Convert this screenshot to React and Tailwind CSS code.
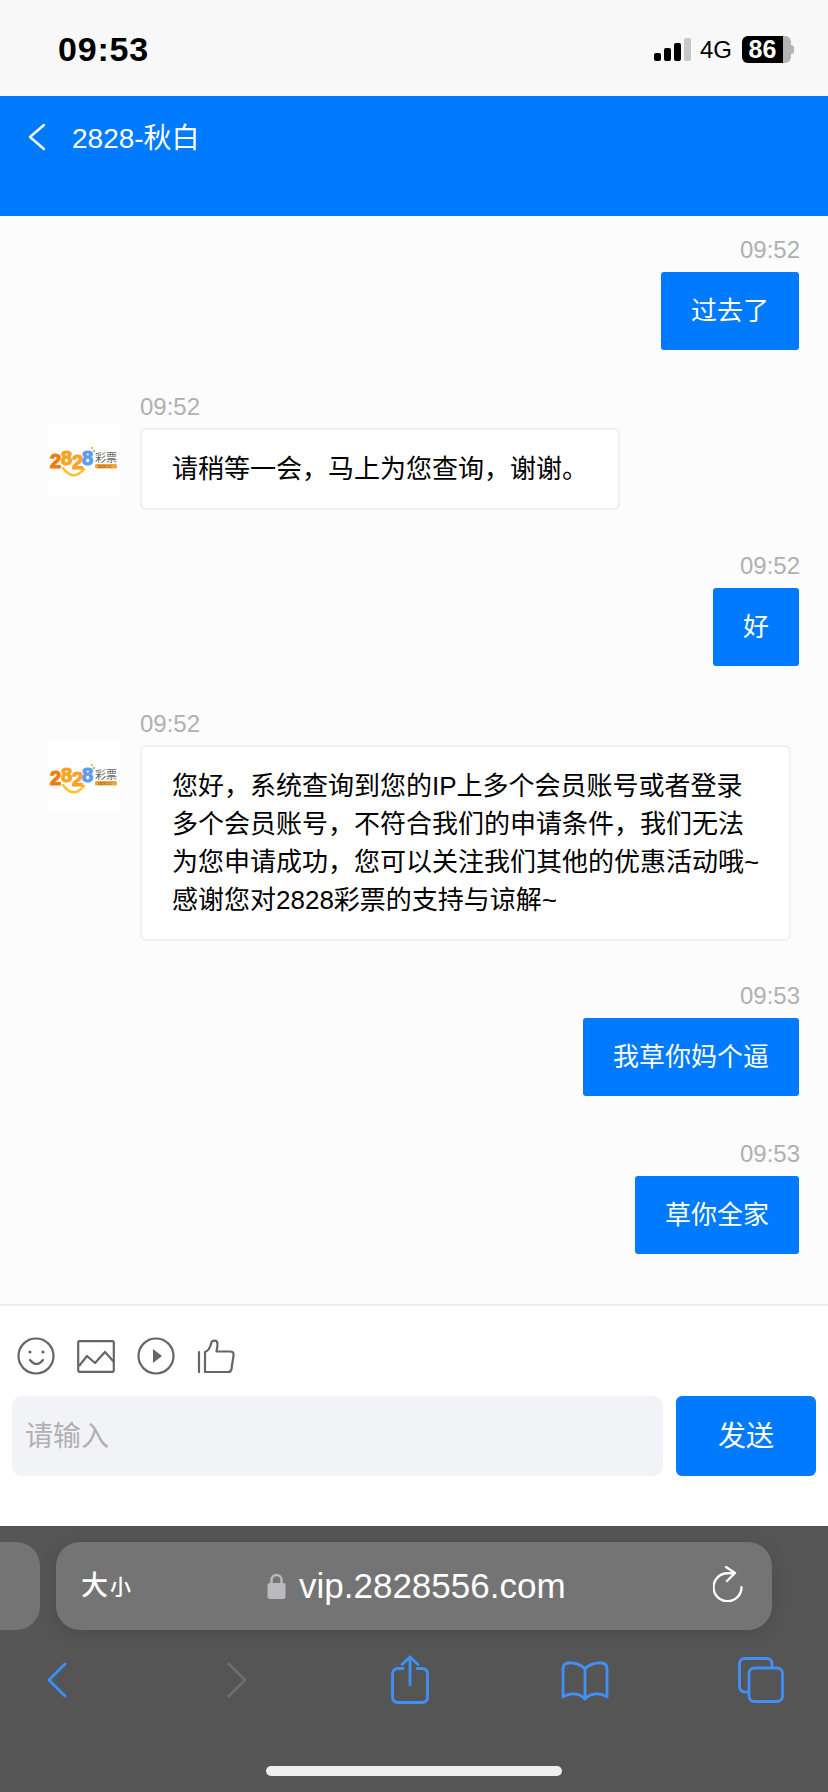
const cjk = "font-['Liberation_Sans','Noto_Sans_CJK_SC',sans-serif]"

const Logo = () => (
  <svg viewBox="0 0 72 72" className="w-full h-full">
    <rect width="72" height="72" fill="#fff" />
    <path d="M15 44 Q25 58 36 45" fill="none" stroke="#fcc22e" strokeWidth="2.6" strokeLinecap="round" />
    <g fontSize="20" fontWeight="700" fontFamily="Liberation Sans" strokeWidth="1.2">
      <text x="2" y="44" fill="#f47a10" stroke="#f47a10">2</text>
      <text x="13" y="41" fill="#f9a51f" stroke="#f9a51f">8</text>
      <text x="24" y="45" fill="#f7a32b" stroke="#f7a32b">2</text>
      <text x="34" y="41" fill="#5f9cee" stroke="#5f9cee">8</text>
    </g>
    <circle cx="44" cy="24" r="1.2" fill="#fbc02d" />
    <circle cx="46" cy="27" r="1" fill="#5f9cee" />
    <text x="47" y="38" fontSize="11" fill="#666" fontFamily="Noto Sans CJK SC">彩票</text>
    <rect x="47" y="40" width="22" height="4.5" rx="1.5" fill="#f2a33a" />
    <text x="49.5" y="43.8" fontSize="3.6" fill="#7a4a10" fontFamily="Liberation Sans">2828.CC</text>
  </svg>
)

const RightMsg = ({ time, text, className }) => (
  <div className={`flex flex-col items-end pr-[29px] ${className}`}>
    <div className="h-[28px] leading-[28px] text-[24px] text-[#b0b0b0] -mr-[1px]">{time}</div>
    <div className="mt-[8px] px-[30px] pt-[20px] pb-[19px] bg-[#007aff] text-white text-[26px] leading-[39px] rounded-[3px]">{text}</div>
  </div>
)

const LeftMsg = ({ time, lines, className }) => (
  <div className={`flex pl-[48px] ${className}`}>
    <div className="mt-[31px] w-[72px] h-[72px] shrink-0"><Logo /></div>
    <div className="ml-[20px] flex flex-col items-start">
      <div className="h-[28px] leading-[28px] text-[24px] text-[#b0b0b0]">{time}</div>
      <div className="mt-[7px] px-[30px] pt-[20px] pb-[20px] bg-white border-2 border-[#f0f0f0] rounded-[6px] text-black text-[26px] leading-[38px]">
        {lines.map((l) => <div key={l} className="whitespace-nowrap">{l}</div>)}
      </div>
    </div>
  </div>
)

export default function App() {
  return (
    <div className={`w-[828px] h-[1792px] flex flex-col overflow-hidden bg-[#fcfcfc] ${cjk}`}>
      {/* status bar */}
      <div className="h-[96px] shrink-0 bg-[#f8f8f8] flex items-center justify-between pl-[58px] pr-[34px] pt-[3px]">
        <div className="text-[34px] font-bold text-black tracking-[0.8px]">09:53</div>
        <div className="flex items-center">
          <div className="flex items-end gap-[3px] h-[23px]">
            <div className="w-[7px] h-[8px] rounded-[2px] bg-black" />
            <div className="w-[7px] h-[13px] rounded-[2px] bg-black" />
            <div className="w-[7px] h-[18px] rounded-[2px] bg-black" />
            <div className="w-[7px] h-[23px] rounded-[2px] bg-[#c8c8c8]" />
          </div>
          <div className="ml-[9px] text-[24px] text-black">4G</div>
          <div className="ml-[10px] w-[49px] h-[27px] rounded-[6px] overflow-hidden flex bg-[#b3b3b3]">
            <div className="w-[41px] bg-black text-white text-[25px] font-bold leading-[27px] text-center">86</div>
          </div>
          <div className="w-[3px] h-[9px] rounded-r-[3px] bg-[#b3b3b3]" />
        </div>
      </div>

      {/* header */}
      <div className="h-[120px] shrink-0 bg-[#007aff] flex items-start text-white pt-[27px] pl-[27px]">
        <svg viewBox="0 0 19 28" className="w-[19px] h-[28px] mr-[26px]" fill="none" stroke="#fff" strokeWidth="2.4" strokeLinecap="round" strokeLinejoin="round">
          <path d="M17 2 L3 14 L17 26" />
        </svg>
        <div className="text-[28px] leading-[32px]">2828-秋白</div>
      </div>

      {/* messages */}
      <div className="h-[1088px] shrink-0 pt-[20px]">
        <RightMsg time="09:52" text="过去了" />
        <LeftMsg className="mt-[43px]" time="09:52" lines={["请稍等一会，马上为您查询，谢谢。"]} />
        <RightMsg className="mt-[42px]" time="09:52" text="好" />
        <LeftMsg
          className="mt-[44px]"
          time="09:52"
          lines={[
            "您好，系统查询到您的IP上多个会员账号或者登录",
            "多个会员账号，不符合我们的申请条件，我们无法",
            "为您申请成功，您可以关注我们其他的优惠活动哦~",
            "感谢您对2828彩票的支持与谅解~",
          ]}
        />
        <RightMsg className="mt-[41px]" time="09:53" text="我草你妈个逼" />
        <RightMsg className="mt-[44px]" time="09:53" text="草你全家" />
      </div>

      {/* composer */}
      <div className="h-[222px] shrink-0 bg-white border-t-2 border-[#eeeeee]">
        <div className="flex items-center gap-[22px] pl-[17px] pt-[31px] text-[#666666]">
          <svg viewBox="0 0 38 38" className="w-[38px] h-[38px]" fill="none" stroke="currentColor" strokeWidth="2.2" strokeLinecap="round">
            <circle cx="19" cy="19" r="17.5" />
            <circle cx="13" cy="15" r="1.6" fill="currentColor" stroke="none" />
            <circle cx="26" cy="15" r="1.6" fill="currentColor" stroke="none" />
            <path d="M13 23 Q19.5 31 26 23" />
          </svg>
          <svg viewBox="0 0 38 33" className="w-[38px] h-[33px]" fill="none" stroke="currentColor" strokeWidth="2.2" strokeLinejoin="round">
            <rect x="1.2" y="1.2" width="35.6" height="30.6" rx="1.5" />
            <path d="M2 26 L10 16 L18 23 L28 12 L37 22" />
          </svg>
          <svg viewBox="0 0 38 38" className="w-[38px] h-[38px]" fill="none" stroke="currentColor" strokeWidth="2.2">
            <circle cx="19" cy="19" r="17.5" />
            <path d="M16 12 L25 19 L16 26 Z" fill="currentColor" stroke="none" />
          </svg>
          <svg viewBox="0 0 38 34" className="w-[38px] h-[34px]" fill="none" stroke="currentColor" strokeWidth="2.2" strokeLinejoin="round" strokeLinecap="round">
            <path d="M2 13 V33" />
            <path d="M8 33 V13 C11 12 13 9 14 5 C14.5 0.5 20.5 0.5 20.5 5 C20.5 7.5 20 10 19.5 12.5 H33 C35.5 12.5 37 14 36.5 16.5 L34.5 30 C34.2 32 33 33 31 33 Z" />
          </svg>
        </div>
        <div className="flex mt-[21px] pl-[12px] pr-[12px] gap-[13px]">
          <div className="flex-1 h-[80px] rounded-[10px] bg-[#f2f3f7] flex items-center pl-[13px] pt-[2px] text-[28px] text-[#b0b0b0]">请输入</div>
          <div className="w-[140px] h-[80px] rounded-[6px] bg-[#007aff] text-white text-[28px] pt-[2px] flex items-center justify-center">发送</div>
        </div>
      </div>

      {/* safari chrome */}
      <div className="flex-1 bg-[#555555] flex flex-col relative">
        <div className="flex gap-[16px] pt-[16px]">
          <div className="w-[40px] h-[88px] rounded-r-[24px] bg-[#747474]" />
          <div className="w-[716px] h-[88px] rounded-[24px] bg-[#747474] shadow-[0_4px_16px_rgba(0,0,0,0.12)] flex items-center pl-[25px] pr-[29px] text-white">
            <div className="flex items-end w-[186px] font-medium">
              <span className="text-[27px] leading-[32px]">大</span>
              <span className="ml-[2px] text-[21px] leading-[30px]">小</span>
            </div>
            <svg viewBox="0 0 19 26" className="w-[19px] h-[26px] mr-[13px]">
              <path d="M4.5 11 V7 a5 5 0 0 1 10 0 V11" fill="none" stroke="#b9b9be" strokeWidth="2.4" />
              <rect x="0.5" y="10" width="18" height="16" rx="2.5" fill="#b9b9be" />
            </svg>
            <div className="text-[35px] leading-[40px] font-['Liberation_Sans',sans-serif] flex-1">vip.2828556.com</div>
            <svg viewBox="0 0 30 36" className="w-[30px] h-[36px] -mt-[4px]" fill="none" stroke="#fff" strokeWidth="2.4" strokeLinecap="round" strokeLinejoin="round">
              <path d="M20 7.3 H14.5 A14 14 0 1 0 28.5 21.3" />
              <path d="M13 1 L22 7 L14 15" />
            </svg>
          </div>
        </div>
        <div className="flex items-start pt-[25px] pl-[47px]">
          <svg viewBox="0 0 20 36" className="w-[20px] h-[36px] mt-[7px]" fill="none" stroke="#3f8ef5" strokeWidth="3" strokeLinecap="round" strokeLinejoin="round">
            <path d="M18 2 L2 18 L18 34" />
          </svg>
          <svg viewBox="0 0 20 36" className="w-[20px] h-[36px] mt-[7px] ml-[160px]" fill="none" stroke="#6c6c6c" strokeWidth="3" strokeLinecap="round" strokeLinejoin="round">
            <path d="M2 2 L18 18 L2 34" />
          </svg>
          <svg viewBox="0 0 38 50" className="w-[38px] h-[50px] ml-[144px]" fill="none" stroke="#4290f7" strokeWidth="2.8" strokeLinecap="round" strokeLinejoin="round">
            <path d="M12 13.5 H7 C3.5 13.5 1.5 15.5 1.5 19 V42 C1.5 45.5 3.5 47.5 7 47.5 H31 C34.5 47.5 36.5 45.5 36.5 42 V19 C36.5 15.5 34.5 13.5 31 13.5 H26" />
            <path d="M19 30 V2 M11 9.5 L19 2 L27 9.5" />
          </svg>
          <svg viewBox="0 0 48 40" className="w-[48px] h-[40px] mt-[6px] ml-[132px]" fill="none" stroke="#4290f7" strokeWidth="2.8" strokeLinecap="round" strokeLinejoin="round">
            <path d="M24 8 C20 3 12 1.5 7 2 C3.5 2.5 2 5 2 8 V36 C8 31.5 18 31.5 24 38 C30 31.5 40 31.5 46 36 V8 C46 5 44.5 2.5 41 2 C36 1.5 28 3 24 8 Z" />
            <path d="M24 8 V38" />
          </svg>
          <svg viewBox="0 0 46 46" className="w-[46px] h-[46px] mt-[2px] ml-[129px]" fill="none" stroke="#4290f7" strokeWidth="2.8" strokeLinejoin="round">
            <path d="M11 35 H7 C3.5 35 1.5 33 1.5 29.5 V7 C1.5 3.5 3.5 1.5 7 1.5 H28.5 C32 1.5 34 3.5 34 7 V11" />
            <rect x="11" y="11" width="33.5" height="33.5" rx="5.5" />
          </svg>
        </div>
        <div className="absolute left-[266px] bottom-[16px] w-[296px] h-[10px] rounded-full bg-[#eeeeee]" />
      </div>
    </div>
  )
}
